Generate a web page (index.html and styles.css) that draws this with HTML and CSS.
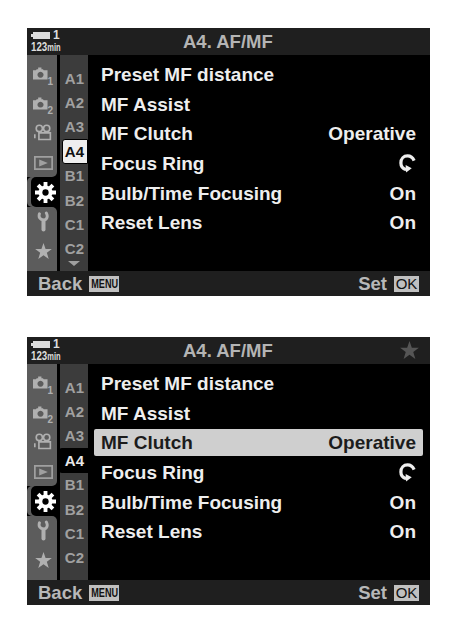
FILE: index.html
```html
<!DOCTYPE html>
<html lang="en">
    <head>
        <meta charset="UTF-8" />
        <meta name="viewport" content="width=device-width, initial-scale=1" />
        <title>A4. AF/MF</title>
        <link rel="stylesheet" href="styles.css">
    </head>
    <body>

        <svg class="icon-defs" aria-hidden="true">
            <symbol id="i-camera" viewBox="0 0 16 13">
                <path fill="currentColor" fill-rule="evenodd" d="M0 3h3l1-1h1.500V0h3.500v2h1.500l1 1h4v10H0zM8 4.500a3.200 3.200 0 1 0 .01 0z"/>
            </symbol>
            <symbol id="i-movie" viewBox="0 0 22 20">
                <g fill="none" stroke="currentColor" stroke-width="2">
                    <circle cx="6.500" cy="5" r="3.800"/>
                    <circle cx="15.500" cy="5" r="3.800"/>
                    <path d="M6 10.500h14v8H6zM1 12v5"/>
                </g>
            </symbol>
            <symbol id="i-play" viewBox="0 0 22 16">
                <path fill="none" stroke="currentColor" stroke-width="2" d="M1 1h20v14H1z"/>
                <path fill="currentColor" d="M6 4l10 4-10 4z"/>
            </symbol>
            <symbol id="i-gear" viewBox="0 0 24 24">
                <path fill="none" stroke="currentColor" stroke-width="4.400" d="M12 0v24M0 12h24M3.500 3.500l17 17M20.500 3.500l-17 17"/>
                <circle cx="12" cy="12" r="8" fill="currentColor"/>
                <circle cx="12" cy="12" r="3.600" fill="#000"/>
            </symbol>
            <symbol id="i-wrench" viewBox="0 0 16 26">
                <path fill="none" stroke="currentColor" stroke-width="3.600" stroke-linecap="round" d="M3 3.500C1.500 8 4 11 8 11c4 0 6-4 3.500-8.500"/>
                <path fill="none" stroke="currentColor" stroke-width="5" stroke-linecap="round" d="M8 12v11"/>
            </symbol>
            <symbol id="i-star" viewBox="0 0 24 23">
                <path fill="currentColor" d="M12 0l3 8.500h9l-7.200 5.400 2.700 9L12 17.500l-7.500 5.400 2.700-9L0 8.500h9z"/>
            </symbol>
            <symbol id="i-rotate" viewBox="0 0 18 20">
                <path fill="none" stroke="currentColor" stroke-width="3.400" d="M16 7C14.500 3.500 12 2 9 2 5 2 2 5 2 9.500c0 3.500 2 6 5.500 7"/>
                <path fill="currentColor" d="M7 11.500l6.500 3.500-6 4.500z"/>
            </symbol>
        </svg>

        <section class="screen">
            <header class="top-bar">
                <div class="battery">
                    <div class="battery-row"><span class="battery-cell"></span><span>1</span></div>
                    <div class="battery-time">123<small>min</small></div>
                </div>
                <h1>A4. AF/MF</h1>
            </header>
            <div class="content">
                <nav class="tabs">
                    <div class="tab tab-cam"><svg class="cam"><use href="#i-camera"/></svg><span class="cam-num">1</span></div>
                    <div class="tab tab-cam"><svg class="cam"><use href="#i-camera"/></svg><span class="cam-num">2</span></div>
                    <div class="tab"><svg class="movie"><use href="#i-movie"/></svg></div>
                    <div class="tab tab-before"><svg class="play"><use href="#i-play"/></svg></div>
                    <div class="tab tab-active"><svg class="gear"><use href="#i-gear"/></svg></div>
                    <div class="tab tab-after"><svg class="wrench"><use href="#i-wrench"/></svg></div>
                    <div class="tab"><svg class="star"><use href="#i-star"/></svg></div>
                </nav>
                <nav class="subtabs">
                    <div class="subtab">A1</div>
                    <div class="subtab">A2</div>
                    <div class="subtab">A3</div>
                    <div class="subtab subtab-light">A4</div>
                    <div class="subtab">B1</div>
                    <div class="subtab">B2</div>
                    <div class="subtab">C1</div>
                    <div class="subtab">C2</div>
                    <div class="more"></div>
                </nav>
                <ul class="items">
                    <li><span>Preset MF distance</span></li>
                    <li><span>MF Assist</span></li>
                    <li><span>MF Clutch</span><span>Operative</span></li>
                    <li><span>Focus Ring</span><svg class="rotate"><use href="#i-rotate"/></svg></li>
                    <li><span>Bulb/Time Focusing</span><span>On</span></li>
                    <li><span>Reset Lens</span><span>On</span></li>
                </ul>
            </div>
            <footer class="bottom-bar">
                <span>Back</span><span class="key key-menu"><span>MENU</span></span>
                <span class="set">Set</span><span class="key key-ok">OK</span>
            </footer>
        </section>

        <section class="screen">
            <header class="top-bar">
                <div class="battery">
                    <div class="battery-row"><span class="battery-cell"></span><span>1</span></div>
                    <div class="battery-time">123<small>min</small></div>
                </div>
                <h1>A4. AF/MF</h1>
                <svg class="fav"><use href="#i-star"/></svg>
            </header>
            <div class="content">
                <nav class="tabs">
                    <div class="tab tab-cam"><svg class="cam"><use href="#i-camera"/></svg><span class="cam-num">1</span></div>
                    <div class="tab tab-cam"><svg class="cam"><use href="#i-camera"/></svg><span class="cam-num">2</span></div>
                    <div class="tab"><svg class="movie"><use href="#i-movie"/></svg></div>
                    <div class="tab tab-before"><svg class="play"><use href="#i-play"/></svg></div>
                    <div class="tab tab-active"><svg class="gear"><use href="#i-gear"/></svg></div>
                    <div class="tab tab-after"><svg class="wrench"><use href="#i-wrench"/></svg></div>
                    <div class="tab"><svg class="star"><use href="#i-star"/></svg></div>
                </nav>
                <nav class="subtabs">
                    <div class="subtab">A1</div>
                    <div class="subtab">A2</div>
                    <div class="subtab">A3</div>
                    <div class="subtab subtab-dark">A4</div>
                    <div class="subtab">B1</div>
                    <div class="subtab">B2</div>
                    <div class="subtab">C1</div>
                    <div class="subtab">C2</div>
                </nav>
                <ul class="items">
                    <li><span>Preset MF distance</span></li>
                    <li><span>MF Assist</span></li>
                    <li class="selected"><span>MF Clutch</span><span>Operative</span></li>
                    <li><span>Focus Ring</span><svg class="rotate"><use href="#i-rotate"/></svg></li>
                    <li><span>Bulb/Time Focusing</span><span>On</span></li>
                    <li><span>Reset Lens</span><span>On</span></li>
                </ul>
            </div>
            <footer class="bottom-bar">
                <span>Back</span><span class="key key-menu"><span>MENU</span></span>
                <span class="set">Set</span><span class="key key-ok">OK</span>
            </footer>
        </section>

    </body>
</html>
```

FILE: styles.css
```css
* {
  box-sizing: border-box;
}
body {
  margin: 0;
  padding: 28px 20px 0 27px;
  background: #fff;
  font-family: 'Liberation Sans', Arial, sans-serif;
  font-weight: bold;
  color: #eee;
  display: flex;
  flex-direction: column;
  gap: 41px;
}
.icon-defs {
  display: none;
}
.screen {
  width: 403px;
  height: 268px;
  background: #000;
  display: flex;
  flex-direction: column;
  overflow: hidden;
}
.top-bar {
  height: 27px;
  flex-shrink: 0;
  background: #1f1f1f;
  display: flex;
  align-items: center;
  position: relative;
  padding-left: 4px;
}
.top-bar h1 {
  margin: 0 0 0 120px;
  font-size: 18.500px;
  color: #b4b4b4;
}
.fav {
  position: absolute;
  right: 11px;
  top: 4px;
  width: 19px;
  height: 18px;
  color: #555;
}
.battery {
  width: 32px;
  color: #ddd;
  line-height: 12px;
}
.battery-row {
  display: flex;
  align-items: center;
  padding-left: 2px;
  gap: 3px;
  font-size: 12px;
}
.battery-cell {
  width: 17px;
  height: 7px;
  background: #ddd;
  position: relative;
}
.battery-cell::before {
  content: '';
  position: absolute;
  left: -2px;
  top: 2px;
  width: 2px;
  height: 3px;
  background: #ddd;
}
.battery-time {
  font-size: 13px;
  white-space: nowrap;
  transform: scaleX(0.75);
  transform-origin: left center;
}
.battery-time small {
  font-size: 10px;
}
.content {
  flex: 1;
  display: flex;
  min-height: 0;
}
.tabs {
  width: 30px;
  display: flex;
  flex-direction: column;
  flex-shrink: 0;
}
.tab {
  height: 29.600px;
  padding-left: 2px;
  display: flex;
  align-items: center;
  justify-content: center;
  background: #5c5c5c;
  color: #b0b0b0;
  position: relative;
}
.tab:first-child {
  height: 33.600px;
  padding-top: 4px;
}
.tab:last-child {
  flex: 1;
  padding-bottom: 5px;
}
.tab-before {
  border-bottom-right-radius: 5px;
}
.tab-after {
  border-top-right-radius: 5px;
}
.tab-active {
  background: #000;
  color: #fff;
  width: 29px;
  margin-left: 4px;
  padding-left: 0;
  box-shadow: -4px 0 0 #5c5c5c;
  border-radius: 5px 0 0 5px;
}
.cam {
  width: 15px;
  height: 13px;
  margin-right: 6px;
}
.cam-num {
  position: absolute;
  right: 4px;
  bottom: 2px;
  font-size: 10px;
}
.movie {
  width: 18px;
  height: 17px;
}
.play {
  width: 19px;
  height: 14px;
  color: #a0a0a0;
}
.gear {
  width: 21px;
  height: 21px;
}
.wrench {
  width: 13px;
  height: 21px;
}
.star {
  width: 17px;
  height: 16px;
}
.subtabs {
  width: 28px;
  margin-left: 3px;
  background: #3c3c3c;
  padding-top: 11px;
  flex-shrink: 0;
}
.subtab {
  height: 24.400px;
  font-size: 15px;
  color: #a0a0a0;
  display: flex;
  align-items: center;
  justify-content: flex-end;
  padding-right: 4px;
}
.subtab-light {
  background: #eee;
  color: #111;
  border: 1px solid #000;
  border-radius: 3px 0 0 3px;
  padding-right: 3px;
  margin-left: 2px;
}
.subtab-dark {
  background: #000;
  color: #e8e8e8;
  margin-left: -1px;
  border-radius: 3px 0 0 3px;
}
.more {
  width: 0;
  height: 0;
  margin: 0 0 0 8px;
  border-left: 6px solid transparent;
  border-right: 6px solid transparent;
  border-top: 5px solid #a0a0a0;
}
.items {
  flex: 1;
  list-style: none;
  margin: 0;
  padding: 5px 7px 0 6px;
}
.items li {
  height: 29.700px;
  display: flex;
  align-items: center;
  justify-content: space-between;
  padding: 0 7px;
  font-size: 19px;
  white-space: nowrap;
}
.items .selected {
  background: #cfcfcf;
  color: #1c1c1c;
  border-radius: 2px;
  height: 27px;
  margin: 1px 0 1.700px;
}
.rotate {
  width: 17px;
  height: 19px;
}
.bottom-bar {
  height: 25px;
  flex-shrink: 0;
  background: #1f1f1f;
  display: flex;
  align-items: center;
  padding: 0 11px;
  font-size: 18.500px;
  color: #b8b8b8;
}
.key {
  background: #c0c0c0;
  color: #111;
  font-weight: normal;
  height: 16px;
  display: flex;
  align-items: center;
  justify-content: center;
}
.key-menu {
  width: 30px;
  margin-left: 7px;
  font-size: 12px;
  font-weight: bold;
}
.key-menu span {
  transform: scaleX(0.76);
}
.set {
  margin-left: auto;
}
.key-ok {
  width: 25px;
  margin-left: 7px;
  font-size: 15px;
}
```
